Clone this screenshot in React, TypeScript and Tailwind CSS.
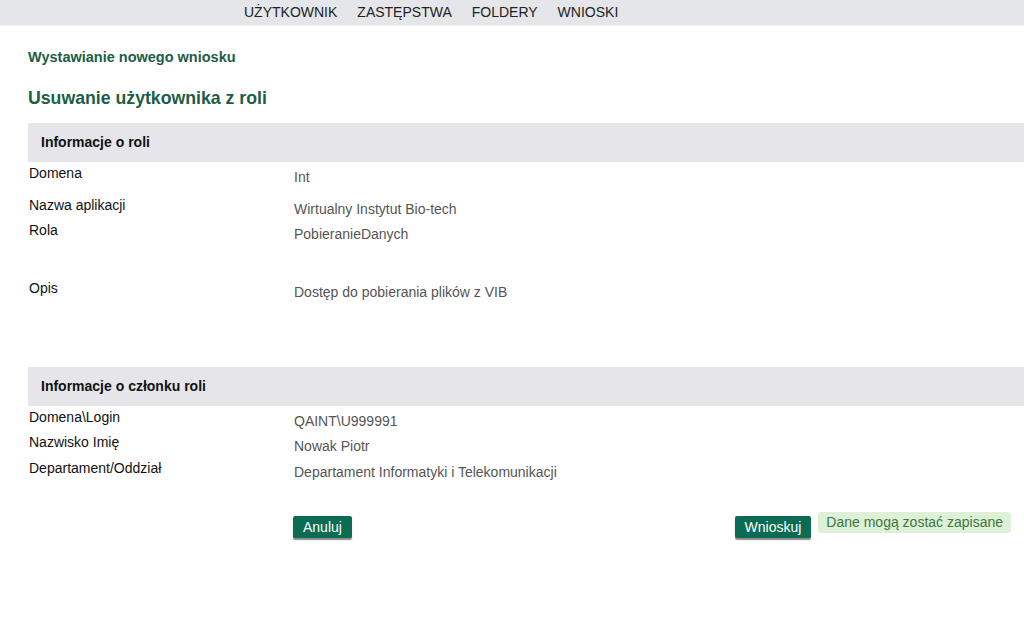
import React from "react";

const font = { fontFamily: '"Liberation Sans", Arial, sans-serif' };

function Row({ label, value, h }: { label: string; value: string; h: string }) {
  return (
    <div className={`flex items-start ${h}`}>
      <div className="w-[266px] pl-px text-[14px] leading-4 text-[#111]">{label}</div>
      <div className="pt-1 text-[14px] leading-4 text-[#555]">{value}</div>
    </div>
  );
}

function SectionHeader({ title }: { title: string }) {
  return (
    <div className="flex h-[39px] items-center bg-[#e6e6ea] pl-[13px] text-[14px] font-bold text-[#111]">
      {title}
    </div>
  );
}

export default function App() {
  return (
    <div style={font} className="min-h-[632px] w-[1024px] bg-white">
      <nav className="flex h-[25px] items-center gap-[20px] bg-[#e5e6ea] pl-[244px] text-[14px] text-[#222] shadow-[0_1px_0_#f2f2f4]">
        <span>UŻYTKOWNIK</span>
        <span>ZASTĘPSTWA</span>
        <span>FOLDERY</span>
        <span>WNIOSKI</span>
      </nav>
      <div className="pl-[28px]">
        <h2 className="mt-[23px] text-[14.5px] font-bold leading-[18px] text-[#1d5d47]">Wystawianie nowego wniosku</h2>
        <h1 className="mt-[21px] text-[17.7px] font-bold leading-[22px] text-[#1d5d47]">Usuwanie użytkownika z roli</h1>
        <div className="mt-[14px]">
          <SectionHeader title="Informacje o roli" />
          <div className="pt-[3px]">
            <Row label="Domena" value="Int" h="h-[32px]" />
            <Row label="Nazwa aplikacji" value="Wirtualny Instytut Bio-tech" h="h-[25px]" />
            <Row label="Rola" value="PobieranieDanych" h="h-[58px]" />
            <Row label="Opis" value="Dostęp do pobierania plików z VIB" h="h-[87px]" />
          </div>
          <SectionHeader title="Informacje o członku roli" />
          <div className="pt-[3px]">
            <Row label="Domena\Login" value="QAINT\U999991" h="h-[25px]" />
            <Row label="Nazwisko Imię" value="Nowak Piotr" h="h-[26px]" />
            <Row label="Departament/Oddział" value="Departament Informatyki i Telekomunikacji" h="h-[26px]" />
          </div>
          <div className="mt-[26px] flex items-start pl-[265px]">
            <button className="mt-[4px] h-[22px] rounded-[2px] bg-[#0b6b53] px-[10px] text-[14px] leading-[20px] text-white shadow-[0_2px_1px_rgba(0,0,0,0.45)]">
              Anuluj
            </button>
            <div className="flex-1" />
            <button className="mt-[4px] h-[22px] rounded-[2px] bg-[#0b6b53] px-[10px] text-[14px] leading-[20px] text-white shadow-[0_2px_1px_rgba(0,0,0,0.45)]">
              Wnioskuj
            </button>
            <div className="ml-[7px] mr-[13px] h-[21px] rounded-[3px] bg-[#dff0d8] px-[8px] text-[14px] leading-[21px] text-[#3c763d]">
              Dane mogą zostać zapisane
            </div>
          </div>
        </div>
      </div>
    </div>
  );
}
